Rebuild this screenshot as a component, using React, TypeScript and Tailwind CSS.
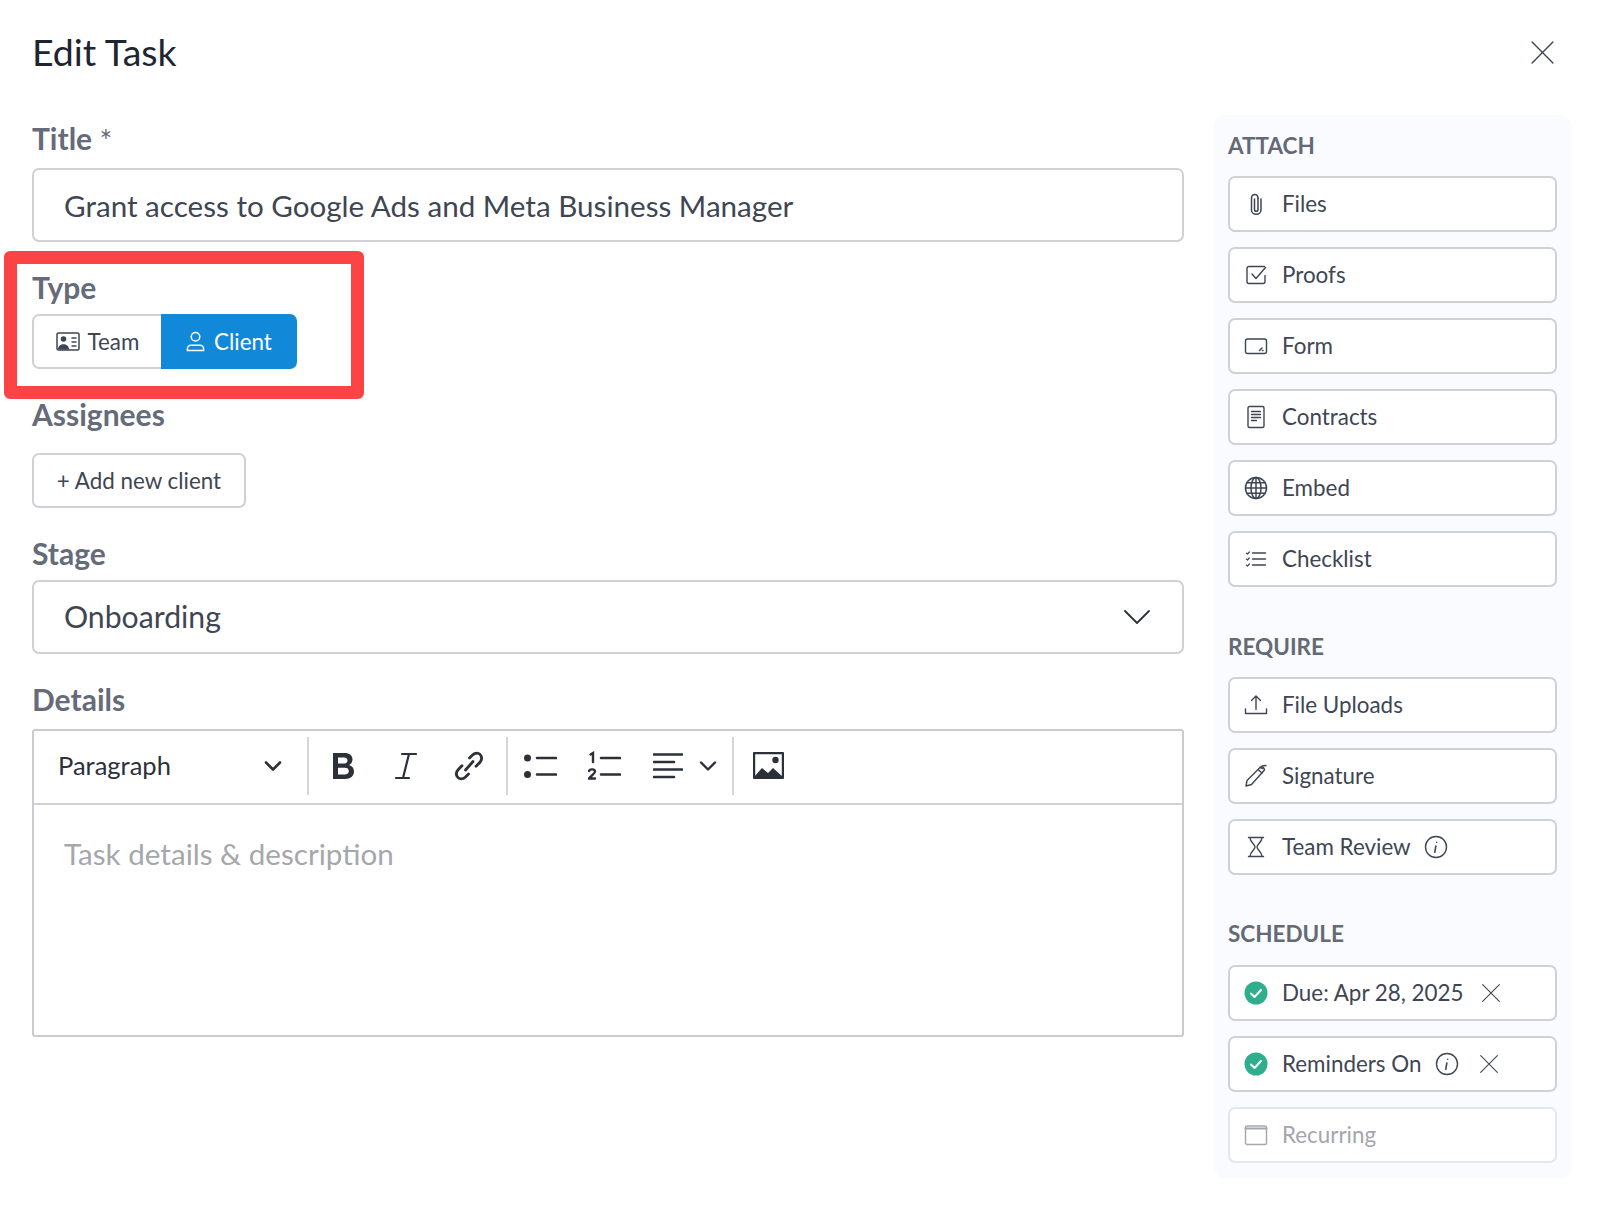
import type { ReactNode } from "react";

const Svg = ({ size = 24, children }: { size?: number; children: ReactNode }) => (
  <svg
    width={size}
    height={size}
    viewBox="0 0 24 24"
    fill="none"
    stroke="currentColor"
    strokeWidth="1.4"
    strokeLinecap="round"
    strokeLinejoin="round"
    className="shrink-0"
  >
    {children}
  </svg>
);

const ClipIcon = () => (
  <Svg>
    <path d="M10.500 7v10.500c0 2.400 3.500 2.400 3.500 0V6" strokeWidth="1.500" />
    <path d="M14 6.500C14 1 7.500 1 7.500 6.500v11.500c0 5.700 9.500 5.700 9.500 0V7" strokeWidth="1.500" />
  </Svg>
);
const ProofIcon = () => (
  <Svg>
    <path d="M21 12.500v6a2 2 0 0 1-2 2H5a2 2 0 0 1-2-2v-13a2 2 0 0 1 2-2h15.500" />
    <path d="M8 11l4 4.500 9.500-11" />
  </Svg>
);
const FormIcon = () => (
  <Svg>
    <rect x="1.500" y="5" width="21" height="14.500" rx="2" />
    <path d="M15.500 16.500l2.500-2.500M18.500 16.500h.5" strokeWidth="1.500" />
  </Svg>
);
const DocIcon = () => (
  <Svg>
    <rect x="4" y="1.500" width="16" height="21" rx="1.500" />
    <path d="M7.500 6.500h9M7.500 9.500h9M7.500 12.500h9M7.500 15.500h5" />
  </Svg>
);
const GlobeIcon = () => (
  <Svg>
    <circle cx="12" cy="12" r="10.500" strokeWidth="1.500" />
    <ellipse cx="12" cy="12" rx="5" ry="10.500" strokeWidth="1.500" />
    <path d="M12 1.500v21M1.500 12h21M3 6.800h18M3 17.200h18" strokeWidth="1.500" />
  </Svg>
);
const ChecklistIcon = () => (
  <Svg>
    <path d="M8.500 6h13M8.500 12h13M8.500 18h13" />
    <path d="M2.500 6.200l1 .8 1.800-2M2.500 12.200l1 .8 1.800-2M2.500 18.200l1 .8 1.800-2" strokeWidth="1.200" />
  </Svg>
);
const UploadIcon = () => (
  <Svg>
    <path d="M1.500 16v4.500h21V16" />
    <path d="M12 16.500V3M7.500 7.500L12 3l4.500 4.500" />
  </Svg>
);
const PenIcon = () => (
  <Svg>
    <path d="M2 22l1-5.500L16 3.500c1.500-1.500 4.500-.5 4.500 2.500L7.500 20.500z" />
    <path d="M16 3.500l3 1M18 2l4-.5M14.500 6l3.500 3" />
  </Svg>
);
const HourglassIcon = () => (
  <Svg>
    <path d="M4.500 2.500h15M4.500 21.500h15M6 2.500c0 5 5 6.500 5 9.500s-5 4.500-5 9.500M18 2.500c0 5-5 6.500-5 9.500s5 4.500 5 9.500" />
  </Svg>
);
const InfoIcon = () => (
  <Svg>
    <circle cx="12" cy="12" r="10.500" />
    <path d="M12.700 7.200v.1M11.800 11l-1 6.300" strokeWidth="1.600" />
  </Svg>
);
const CloseIcon = ({ size = 20 }: { size?: number }) => (
  <Svg size={size}>
    <path d="M2 2l20 20M22 2L2 22" strokeWidth="1.300" />
  </Svg>
);
const DoneIcon = () => (
  <svg width="24" height="24" viewBox="0 0 24 24" className="shrink-0">
    <circle cx="12" cy="12" r="11.500" fill="#2fae8e" />
    <path d="M7 12.500l3.500 3.500 6.500-7" fill="none" stroke="#fff" strokeWidth="2" strokeLinecap="round" strokeLinejoin="round" />
  </svg>
);
const CalendarIcon = () => (
  <Svg>
    <rect x="1.500" y="3" width="21" height="18.500" rx="1.500" />
    <path d="M1.500 5.500h21" strokeWidth="2" />
  </Svg>
);

const rows = {
  attach: [
    { label: "Files", icon: <ClipIcon /> },
    { label: "Proofs", icon: <ProofIcon /> },
    { label: "Form", icon: <FormIcon /> },
    { label: "Contracts", icon: <DocIcon /> },
    { label: "Embed", icon: <GlobeIcon /> },
    { label: "Checklist", icon: <ChecklistIcon /> },
  ],
};

const SideRow = ({
  icon,
  label,
  dim,
  children,
}: {
  icon: ReactNode;
  label: string;
  dim?: boolean;
  children?: ReactNode;
}) => (
  <div
    className={`flex h-[56px] items-center gap-[14px] rounded-[7px] border-2 bg-white pl-[14px] text-[22.400px] ${
      dim ? "border-[#e6e7ec] text-[#a3a6ad]" : "border-[#cfd1d7] text-[#3f4653]"
    }`}
  >
    {icon}
    <span>{label}</span>
    {children}
  </div>
);

const SideTitle = ({ children, className }: { children: ReactNode; className: string }) => (
  <p className={`text-[22.500px] leading-[30px] font-bold text-[#646a75] ${className}`}>{children}</p>
);

const Label = ({ children, className }: { children: ReactNode; className: string }) => (
  <p className={`text-[30px] leading-[36px] font-bold text-[#656b78] ${className}`}>{children}</p>
);

const ToolDivider = () => <div className="h-[58px] w-[2px] bg-[#d5d6da]" />;

const EditorToolbar = () => (
  <div className="flex h-[74px] items-center border-b-2 border-[#d0d1d6] pb-[3px] text-[#2b3039]">
    <div className="flex w-[273px] items-center justify-between pr-[25px] pl-[24px]">
      <span className="text-[25.500px]">Paragraph</span>
      <svg width="18" height="18" viewBox="0 0 18 18" fill="none" stroke="currentColor" strokeWidth="2.600" strokeLinecap="round" strokeLinejoin="round">
        <path d="M2 5.500l7 7 7-7" />
      </svg>
    </div>
    <ToolDivider />
    <div className="flex w-[197px] items-center justify-between px-[22px]">
      <svg width="26" height="28" viewBox="0 0 26 28">
        <path fillRule="evenodd" fill="currentColor" d="M2 1h11.500c5 0 8 2.500 8 6.500 0 2.600-1.300 4.500-3.500 5.500 3 .8 5 3.200 5 6.500 0 4.500-3.500 7.500-9 7.500H2zM7 5.500v6h6c2.200 0 3.500-1.100 3.500-3s-1.300-3-3.500-3zM7 15.800v6.700h6.800c2.500 0 4-1.200 4-3.400 0-2.100-1.500-3.300-4-3.300z" />
      </svg>
      <svg width="22" height="28" viewBox="0 0 22 28" fill="none" stroke="currentColor" strokeWidth="2.200" strokeLinecap="round">
        <path d="M7 2h14M1 26h13M14 2L8 26" />
      </svg>
      <svg width="30" height="30" viewBox="0 0 30 30" fill="none" stroke="currentColor" strokeWidth="2.800" strokeLinecap="round">
        <path d="M15.500 7l3-3c2.800-2.600 6.400-2.400 8 0 1.800 2.500 1.400 5.300-1 7.800l-3.500 3.500" />
        <path d="M14.500 23l-3 3c-2.800 2.600-6.400 2.400-8 0-1.800-2.500-1.400-5.300 1-7.800l3.500-3.500" />
        <path d="M11.500 19l7.500-8.500" />
      </svg>
    </div>
    <ToolDivider />
    <div className="flex flex-1 items-center pl-[16px]">
      <svg width="33" height="26" viewBox="0 0 33 26" stroke="currentColor" strokeWidth="2.600" strokeLinecap="round">
        <circle cx="3.500" cy="5" r="3.500" fill="currentColor" stroke="none" />
        <circle cx="3.500" cy="21.500" r="3.500" fill="currentColor" stroke="none" />
        <path d="M13 5h19M13 21.500h19" />
      </svg>
      <svg width="33" height="30" viewBox="0 0 33 30" className="ml-[31px]" fill="none" stroke="currentColor" strokeWidth="2.600" strokeLinecap="round">
        <path d="M13 7h19M13 23.500h19" />
        <path d="M2.500 3.500L5 2v9" strokeWidth="2.400" />
        <path d="M1 20c1-2.500 6-2 6 .5 0 2-3.500 3.500-6 7h6" strokeWidth="2.400" />
      </svg>
      <svg width="30" height="26" viewBox="0 0 30 26" className="ml-[32px]" stroke="currentColor" strokeWidth="2.600" strokeLinecap="round">
        <path d="M1 1.500h28M1 9h20M1 16.500h28M1 24h20" />
      </svg>
      <svg width="18" height="18" viewBox="0 0 18 18" className="ml-[16px]" fill="none" stroke="currentColor" strokeWidth="2.400" strokeLinecap="round" strokeLinejoin="round">
        <path d="M2 5.500l7 7 7-7" />
      </svg>
      <div className="ml-[15px] h-[58px] w-[2px] bg-[#d5d6da]" />
      <svg width="31" height="27" viewBox="0 0 31 27" className="ml-[19px]" fill="none">
        <rect x="1" y="1" width="29" height="25" rx="1" stroke="currentColor" strokeWidth="2.400" />
        <circle cx="22.500" cy="8" r="3.200" fill="currentColor" />
        <path d="M1 25l8-9 6 5 5-5 10 9v1H1z" fill="currentColor" />
      </svg>
    </div>
  </div>
);

const App = () => {
  return (
    <div
      className="h-[1215px] w-[1600px] overflow-hidden bg-white pt-[29px] pl-[32px]"
      style={{ fontFamily: "Lato, 'Noto Sans', sans-serif" }}
    >
      <header className="flex h-[46px] items-center justify-between pr-[45px]">
        <h1 className="text-[37.500px] leading-[46px] font-normal text-[#1e2532]">Edit Task</h1>
        <span className="text-[#3c4350]">
          <CloseIcon size={25} />
        </span>
      </header>

      <div className="flex items-start">
        <main className="w-[1152px]">
          <Label className="mt-[45px]">
            Title <span className="relative top-[2px] text-[30px] font-normal">*</span>
          </Label>
          <div className="mt-[12px] flex h-[74px] items-center rounded-[7px] border-2 border-[#cfd1d7] pt-[3px] pl-[30px] text-[29.600px] text-[#3f4653]">
            Grant access to Google Ads and Meta Business Manager
          </div>

          {/* red highlight sits over the type block */}
          <div className="relative">
            <Label className="mt-[27px]">Type</Label>
            <div className="mt-[9px] flex h-[55px] w-[265px] text-[22.400px]">
              <div className="flex w-[129px] items-center justify-center gap-[8px] rounded-l-[7px] border-2 border-r-0 border-[#cfd1d7] text-[#3f4653]">
                <svg width="24" height="20" viewBox="0 0 24 20" fill="none" className="shrink-0">
                  <rect x="1" y="1" width="22" height="17" rx="1.500" stroke="currentColor" strokeWidth="1.500" />
                  <circle cx="7.500" cy="7" r="2.800" fill="currentColor" />
                  <path d="M2 17.500c0-7 11-7 11 0z" fill="currentColor" />
                  <path d="M15.500 6h5M15.500 10h5M15.500 14h5" stroke="currentColor" strokeWidth="1.300" />
                </svg>
                Team
              </div>
              <div className="flex flex-1 items-center justify-center gap-[9px] rounded-r-[7px] bg-[#1288d8] text-white">
                <svg width="19" height="21" viewBox="0 0 20 22" fill="none" stroke="currentColor" strokeWidth="1.600" className="shrink-0">
                  <circle cx="10" cy="6" r="4.500" />
                  <path d="M1.500 20.500v-1.800c0-2 1.700-3.700 3.700-3.700h9.600c2 0 3.700 1.700 3.700 3.700v1.800z" />
                </svg>
                Client
              </div>
            </div>
            <div className="pointer-events-none absolute -top-[18px] -left-[28px] h-[148px] w-[360px] rounded-[6px] border-[13px] border-[#fd4444]" />
          </div>

          <Label className="mt-[27px]">Assignees</Label>
          <div className="mt-[21px] flex h-[55px] w-[214px] items-center justify-center rounded-[7px] border-2 border-[#cfd1d7] text-[22.400px] text-[#3f4653]">
            + Add new client
          </div>

          <Label className="mt-[27px]">Stage</Label>
          <div className="mt-[9px] flex h-[74px] items-center justify-between rounded-[7px] border-2 border-[#cfd1d7] pr-[32px] pl-[30px] text-[30.200px] text-[#3f4653]">
            Onboarding
            <svg width="26" height="16" viewBox="0 0 26 16" fill="none" stroke="#2b3039" strokeWidth="1.800" strokeLinecap="round" strokeLinejoin="round">
              <path d="M1 2l12 12L25 2" />
            </svg>
          </div>

          <Label className="mt-[27px]">Details</Label>
          <div className="mt-[12px] h-[308px] rounded-[3px] border-2 border-[#c9cbd1]">
            <EditorToolbar />
            <p className="pt-[27px] pl-[30px] text-[29.600px] text-[#a5a7ac]">Task details &amp; description</p>
          </div>
        </main>

        <aside className="mt-[40px] ml-[30px] h-[1063px] w-[358px] rounded-[12px] bg-[#fafbfe] pt-[16px] pr-[15px] pl-[14px]">
          <SideTitle className="">ATTACH</SideTitle>
          <div className="mt-[15px] flex flex-col gap-[15px]">
            {rows.attach.map((r) => (
              <SideRow key={r.label} icon={r.icon} label={r.label} />
            ))}
          </div>

          <SideTitle className="mt-[45px]">REQUIRE</SideTitle>
          <div className="mt-[15px] flex flex-col gap-[15px]">
            <SideRow icon={<UploadIcon />} label="File Uploads" />
            <SideRow icon={<PenIcon />} label="Signature" />
            <SideRow icon={<HourglassIcon />} label="Team Review">
              <span className="ml-[-1px]">
                <InfoIcon />
              </span>
            </SideRow>
          </div>

          <SideTitle className="mt-[44px]">SCHEDULE</SideTitle>
          <div className="mt-[16px] flex flex-col gap-[15px]">
            <SideRow icon={<DoneIcon />} label="Due: Apr 28, 2025">
              <span className="ml-[3px]">
                <CloseIcon />
              </span>
            </SideRow>
            <SideRow icon={<DoneIcon />} label="Reminders On">
              <InfoIcon />
              <span className="ml-[6px]">
                <CloseIcon />
              </span>
            </SideRow>
            <SideRow icon={<CalendarIcon />} label="Recurring" dim />
          </div>
        </aside>
      </div>
    </div>
  );
};

export default App;
